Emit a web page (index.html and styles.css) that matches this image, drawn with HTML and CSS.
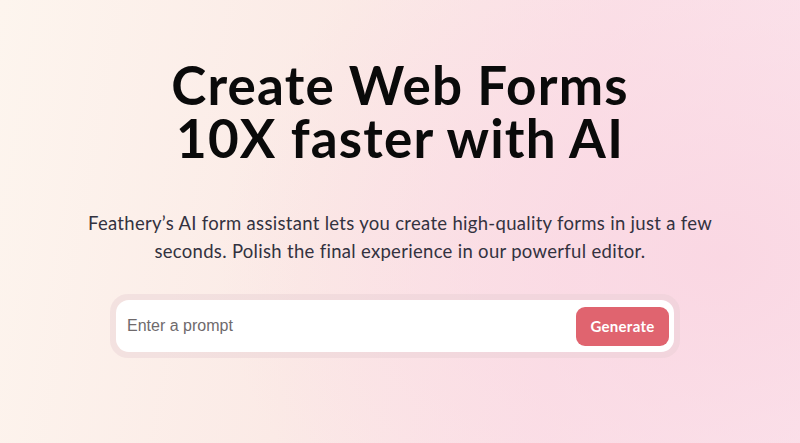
FILE: index.html
```html
<!DOCTYPE html>
<html>
<head>
<meta charset="utf-8">
<link rel="stylesheet" href="styles.css">
</head>
<body>
<main class="hero">
  <h1 class="title"><span class="title-line">Create Web Forms</span><span class="title-line">10X faster with AI</span></h1>
  <p class="lead">Feathery’s AI form assistant lets you create high-quality forms in just a few seconds. Polish the final experience in our powerful editor.</p>
  <div class="prompt-ring">
    <div class="prompt">
      <input class="prompt-input" type="text" placeholder="Enter a prompt">
      <button class="generate">Generate</button>
    </div>
  </div>
</main>
</body>
</html>
```
FILE: styles.css
```css
html, body {
  margin: 0;
  padding: 0;
  height: 100%;
}
body {
  width: 800px;
  height: 443px;
  overflow: hidden;
  background:
    radial-gradient(ellipse 500px 400px at 720px 260px, rgba(250, 214, 226, 0.9), rgba(250, 214, 226, 0) 100%),
    linear-gradient(100deg, #fdf5ee 0%, #fbeae6 40%, #fbe2e8 70%, #fbe6ee 100%);
  font-family: Lato, "Noto Sans", sans-serif;
}
.hero {
  display: flex;
  flex-direction: column;
  align-items: center;
  padding-top: 58px;
}
.title {
  margin: 0;
  display: flex;
  flex-direction: column;
  align-items: center;
  font-size: 53px;
  font-weight: 700;
  color: #0a0a0a;
  text-align: center;
  letter-spacing: 1.2px;
}
.title-line {
  display: block;
  height: 53px;
  line-height: 53px;
}
.title-line + .title-line {
  margin-top: 0;
}
.lead {
  margin: 45px 0 0;
  width: 660px;
  font-size: 18.5px;
  line-height: 28px;
  letter-spacing: 0.3px;
  color: #33323f;
  text-align: center;
}
.prompt-ring {
  margin-top: 29px;
  margin-right: 10px;
  width: 558px;
  padding: 6px;
  background: rgba(230, 205, 210, 0.4);
  border-radius: 18px;
}
.prompt {
  display: flex;
  align-items: center;
  justify-content: space-between;
  background: #fff;
  border-radius: 13px;
  height: 52px;
  padding: 0 5px 0 11px;
}
.prompt-input {
  flex: 1;
  border: none;
  outline: none;
  background: transparent;
  font-family: "Liberation Sans", Arial, sans-serif;
  font-size: 16px;
  color: #333;
  padding: 0;
}
.prompt-input::placeholder {
  color: #6f6a6c;
}
.generate {
  width: 93px;
  height: 39px;
  border: none;
  border-radius: 9px;
  background: #e0646f;
  color: #fff;
  font-family: Lato, "Noto Sans", sans-serif;
  font-weight: 700;
  font-size: 15px;
  letter-spacing: 0.3px;
  cursor: pointer;
}
```
